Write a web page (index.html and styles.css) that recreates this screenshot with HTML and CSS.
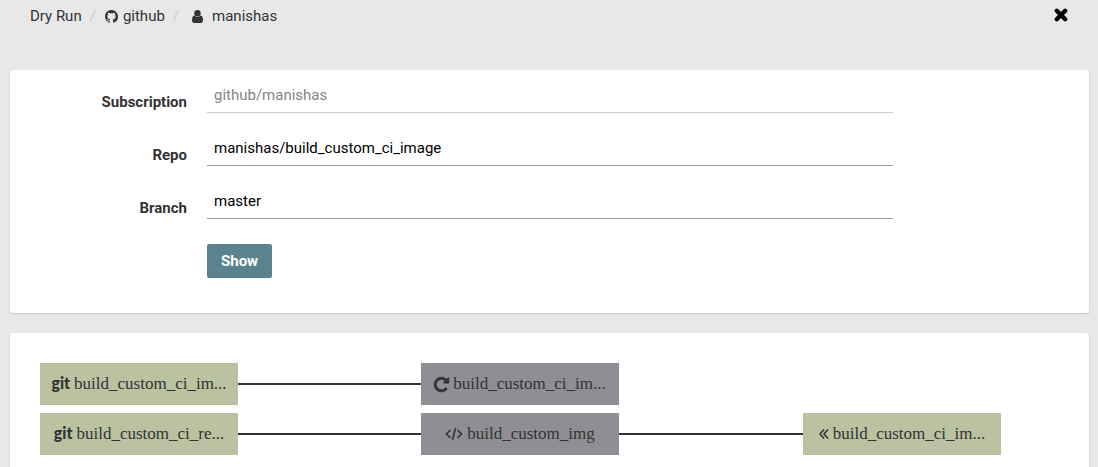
FILE: index.html
```html
<!DOCTYPE html>
<html lang="en">
<head>
<meta charset="utf-8">
<title>Dry Run</title>
<link rel="stylesheet" href="styles.css">
</head>
<body>
<header class="topbar">
  <nav class="crumbs" aria-label="Breadcrumb">
    <a href="#">Dry Run</a>
    <span class="slash">/</span>
    <a href="#" class="crumb-github"><svg class="icon-github" viewBox="0 0 16 16"><path d="M8 0C3.58 0 0 3.58 0 8c0 3.54 2.29 6.53 5.47 7.59.4.07.55-.17.55-.38 0-.19-.01-.82-.01-1.49-2.01.37-2.53-.49-2.69-.94-.09-.23-.48-.94-.82-1.13-.28-.15-.68-.52-.01-.53.63-.01 1.08.58 1.23.82.72 1.21 1.87.87 2.33.66.07-.52.28-.87.51-1.07-1.78-.2-3.64-.89-3.64-3.95 0-.87.31-1.59.82-2.15-.08-.2-.36-1.02.08-2.12 0 0 .67-.21 2.2.82.64-.18 1.32-.27 2-.27s1.36.09 2 .27c1.53-1.04 2.2-.82 2.2-.82.44 1.1.16 1.92.08 2.12.51.56.82 1.27.82 2.15 0 3.07-1.87 3.75-3.65 3.95.29.25.54.73.54 1.48 0 1.07-.01 1.93-.01 2.2 0 .21.15.46.55.38A8.01 8.01 0 0 0 16 8c0-4.42-3.58-8-8-8z"/></svg>github</a>
    <span class="slash">/</span>
    <a href="#" class="crumb-user"><svg class="icon-user" viewBox="0 0 11 13"><circle cx="5.5" cy="3.2" r="3.2"/><path d="M2.4 5.600C.7 5.900 0 7.800 0 10.300 0 12 .9 13 2.300 13h6.400c1.400 0 2.300-1 2.300-2.700 0-2.500-.7-4.400-2.400-4.700C7.600 6.500 6.600 7 5.500 7s-2.300-.5-3.100-1.400z"/></svg>manishas</a>
  </nav>
  <button class="close" type="button" aria-label="Close"><svg class="icon-close" viewBox="0 0 14 14"><path d="M2.800 2.800l8.400 8.400M11.200 2.800l-8.400 8.400"/></svg></button>
</header>
<main>
  <form class="card form">
    <label for="subscription">Subscription</label>
    <input id="subscription" type="text" value="github/manishas" disabled>
    <label for="repo">Repo</label>
    <input id="repo" type="text" value="manishas/build_custom_ci_image">
    <label for="branch">Branch</label>
    <input id="branch" type="text" value="master">
    <button class="show" type="button">Show</button>
  </form>
  <section class="card graph">
    <div class="node resource"><span class="git">git</span><span>build_custom_ci_im...</span></div>
    <div class="edge"></div>
    <div class="node job"><svg class="icon-repeat" viewBox="0 0 1536 1536"><path d="M1536 128v448q0 26-19 45t-45 19h-448q-42 0-59-40-17-39 14-69l138-138q-148-137-349-137-104 0-198.500 40.500t-163.500 109.500-109.500 163.500-40.500 198.500 40.500 198.500 109.500 163.500 163.500 109.500 198.500 40.500q119 0 225-52t179-147q7-10 23-12 15 0 25 9l137 138q9 8 9.500 20.500t-7.500 22.500q-109 132-264 204.500t-327 72.500q-156 0-298-61t-245-164-164-245-61-298 61-298 164-245 245-164 298-61q147 0 284.500 55.500t244.500 156.500l130-129q29-31 70-14 39 17 39 59z"/></svg><span>build_custom_ci_im...</span></div>
    <div class="node resource row-two"><span class="git">git</span><span>build_custom_ci_re...</span></div>
    <div class="edge"></div>
    <div class="node job"><svg class="icon-code" viewBox="0 0 18 14"><path d="M5.500 3L1.500 7l4 4M12.500 3l4 4-4 4M10.500 1.200l-3 11.600"/></svg><span>build_custom_img</span></div>
    <div class="edge"></div>
    <div class="node resource"><svg class="icon-back" viewBox="0 0 10 12"><path d="M5 1.500L1 6l4 4.500M9 1.500L5 6l4 4.500"/></svg><span>build_custom_ci_im...</span></div>
  </section>
</main>
</body>
</html>
```
FILE: styles.css
```css
* { box-sizing: border-box; }

body {
  margin: 0;
  min-height: 100vh;
  display: flex;
  flex-direction: column;
  background: #e8e8e8;
  color: #333;
  font: 15px/20px Roboto, sans-serif;
}

.topbar {
  display: flex;
  justify-content: space-between;
  align-items: flex-start;
  height: 70px;
  padding: 6px 30px;
}

.crumbs { display: flex; }
.crumbs a {
  display: flex;
  align-items: center;
  color: #333;
  text-decoration: none;
}
.slash { padding: 0 9px 0 8px; color: #ccc; }
.crumb-github { gap: 5px; }
.crumb-user { gap: 9px; padding-left: 4px; }

svg { flex: none; fill: #333; }
.icon-github { width: 13px; height: 13px; }
.icon-user { width: 11px; height: 13px; }

.close {
  display: flex;
  padding: 2px 0;
  border: 0;
  background: none;
}
.icon-close {
  width: 14px;
  height: 14px;
  stroke: #000;
  stroke-width: 4.4;
  stroke-linecap: round;
}

main {
  flex: 1;
  display: flex;
  flex-direction: column;
  gap: 20px;
  padding: 0 9px 0 10px;
}

.card {
  background: #fff;
  border-radius: 3px;
  box-shadow: 0 1px 2px rgba(0, 0, 0, 0.15);
}

.form {
  display: grid;
  grid-template-columns: 177px 1fr;
  column-gap: 20px;
  row-gap: 19px;
  padding: 9px 196px 35px 0;
}
.form label {
  padding-top: 13px;
  text-align: right;
  font-weight: 700;
}
.form input {
  width: 100%;
  height: 34px;
  padding: 0 7px 2px;
  border: 0;
  border-bottom: 1px solid #90999c;
  background: none;
  color: #000;
  font: inherit;
}
.form input:disabled { border-color: #c8cccf; color: #858585; }

.show {
  grid-column: 2;
  justify-self: start;
  height: 34px;
  margin-top: 6px;
  padding: 0 14px;
  border: 0;
  border-radius: 2px;
  background: #5a838f;
  color: #fff;
  font: inherit;
  font-weight: 700;
}

.graph {
  flex: 1;
  display: grid;
  grid-template-columns: 198px 183px 198px 184px 198px;
  grid-auto-rows: 42px;
  row-gap: 8px;
  padding: 30px 30px 12px;
  border-radius: 3px 3px 0 0;
}
.row-two { grid-column: 1; }
.edge {
  align-self: center;
  height: 2px;
  background: #333;
}
.node {
  display: flex;
  align-items: center;
  justify-content: center;
  gap: 4px;
  font: 17px/20px "Liberation Serif", serif;
}
.resource { background: #bbc2a1; }
.job { background: #8f8e94; }
.git {
  font: 900 16px/20px Lato, sans-serif;
  padding-bottom: 3px;
}
.icon-repeat {
  width: 15px;
  height: 15px;
  overflow: visible;
  stroke: #333;
  stroke-width: 50;
}
.icon-code { width: 18px; height: 14px; }
.icon-back { width: 10px; height: 12px; }
.icon-code, .icon-back { fill: none; stroke: #333; stroke-width: 1.6; }
```
